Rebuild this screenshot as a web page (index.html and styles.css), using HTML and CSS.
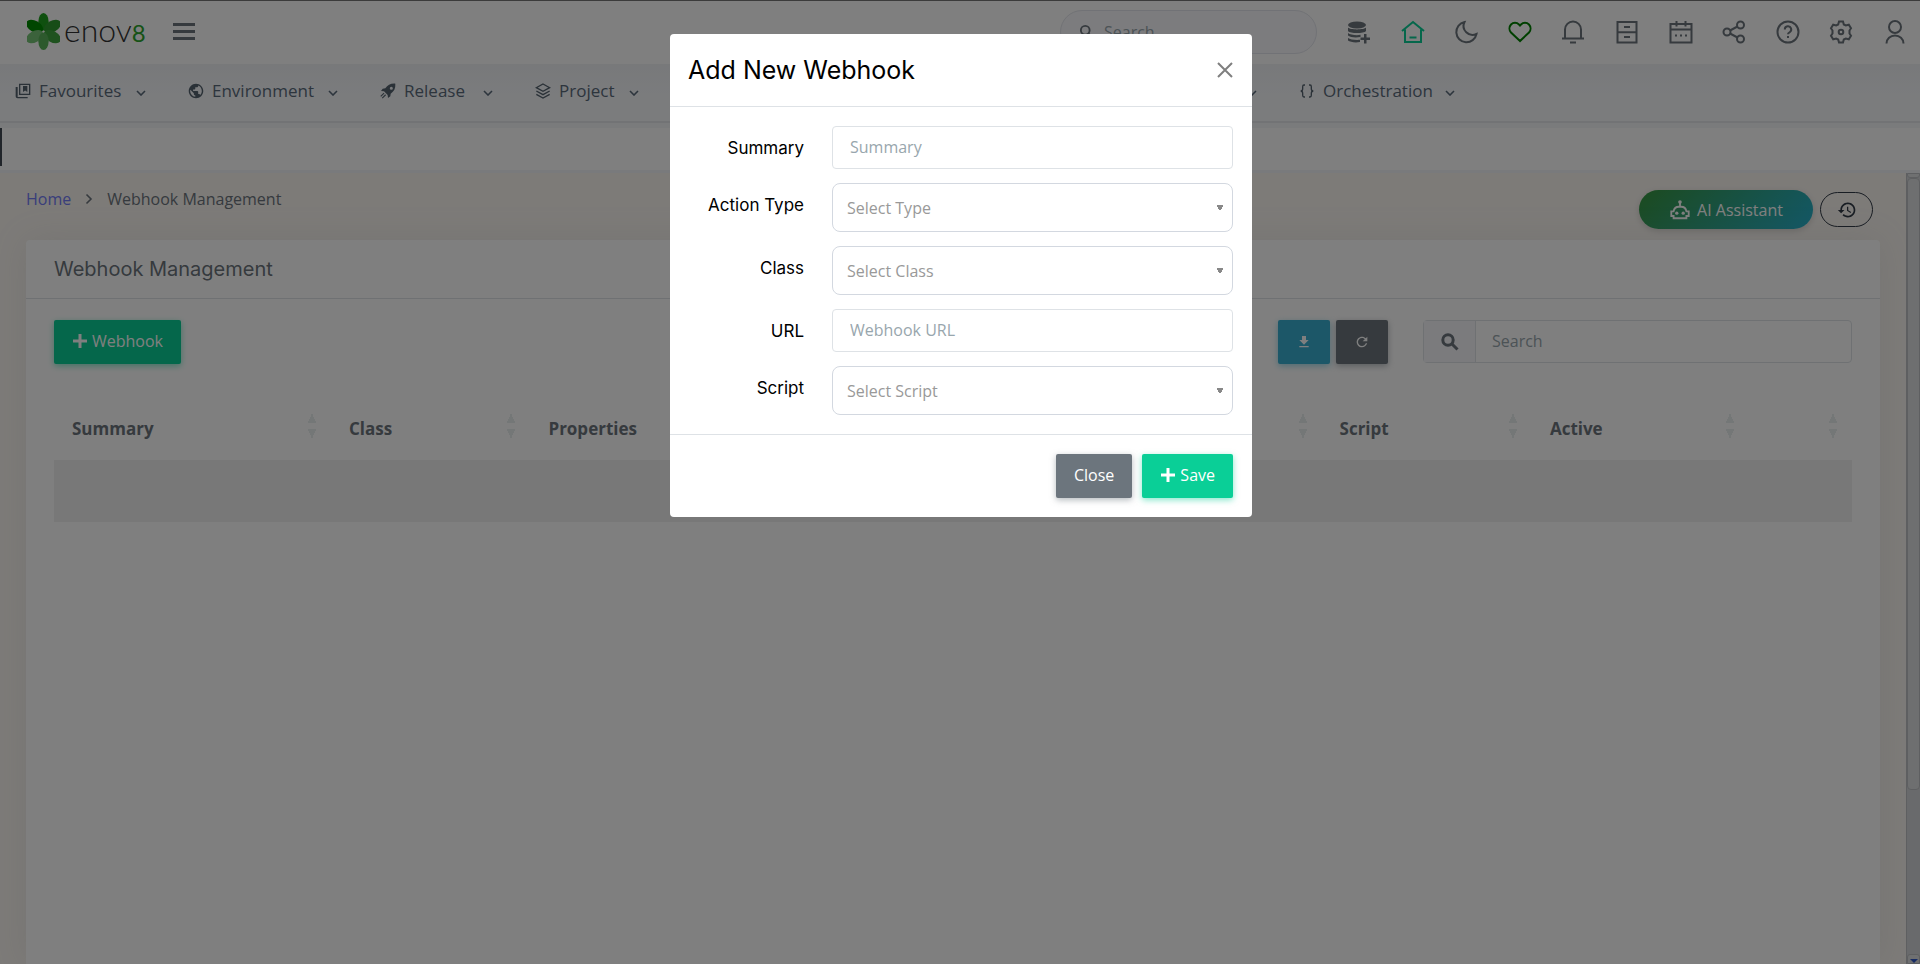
FILE: index.html
```html
<!DOCTYPE html>
<html lang="en">
    <head>
        <meta charset="utf-8">
        <title>Webhook Management</title>
        <link rel="stylesheet" href="styles.css">
    </head>

    <body>

        <header class="topbar">
            <a href="#" class="logo" aria-label="enov8">
                <svg class="logo_flower" viewBox="0 0 32 36">
                    <ellipse cx="16" cy="8.500" rx="5" ry="8.500" fill="#1fa01f"/>
                    <ellipse cx="16" cy="8" rx="5.500" ry="9" fill="#008c00" transform="rotate(-60 16 18)"/>
                    <ellipse cx="16" cy="8" rx="5.500" ry="9" fill="#2f9b2f" transform="rotate(60 16 18)"/>
                    <ellipse cx="16" cy="8" rx="5.500" ry="9" fill="#77c477" transform="rotate(-120 16 18)"/>
                    <ellipse cx="16" cy="8" rx="5.500" ry="9" fill="#3fa53f" transform="rotate(120 16 18)"/>
                    <ellipse cx="16" cy="8.500" rx="5" ry="8.500" fill="#5ab35a" transform="rotate(180 16 18)"/>
                </svg>
                <span class="logo_text">enov<span class="logo_eight">8</span></span>
            </a>
            <button type="button" class="menu_toggle" aria-label="Menu"><i></i><i></i><i></i></button>

            <div class="top_search">
                <svg class="line_icon small" viewBox="0 0 24 24"><circle cx="10" cy="10" r="7"/><path d="M15 15l6 6"/></svg>
                <input type="text" placeholder="Search" aria-label="Search">
            </div>

            <div class="top_icons">
                <button type="button" aria-label="Data">
                    <svg class="fill_icon" viewBox="0 0 24 24"><ellipse cx="10" cy="5" rx="9" ry="3.500"/><path d="M1 7.500c2 2.500 16 2.500 18 0v3.500c-2 2.800-16 2.800-18 0zM1 13c2 2 9 2.600 12.500 1.800V17C9 18 3 17.500 1 15.500zM1 18c2 1.500 7 2.200 12 1.800V22C8 23 3 22 1 20.500zM17 14h2.500v3.500H23V20h-3.500v3.500H17V20h-3.500v-2.500H17z"/></svg>
                </button>
                <button type="button" aria-label="Home">
                    <svg class="line_icon home" viewBox="0 0 24 24"><path d="M1 11L12 2l11 9M4 9.500V22h16V9.500M8.500 17.500h7"/></svg>
                </button>
                <button type="button" aria-label="Dark mode">
                    <svg class="line_icon" viewBox="0 0 24 24"><path d="M10.500 2A10.200 10.200 0 1 0 22.500 14 9 9 0 0 1 10.500 2z"/></svg>
                </button>
                <button type="button" aria-label="Health">
                    <svg class="line_icon heart" viewBox="0 0 24 24"><path d="M12 21L3 12.500a6 6 0 0 1 0-8 5.700 5.700 0 0 1 8 0l1 1 1-1a5.700 5.700 0 0 1 8 0 6 6 0 0 1 0 8z"/></svg>
                </button>
                <button type="button" aria-label="Notifications">
                    <svg class="line_icon" viewBox="0 0 24 24"><path d="M1 18.500h22M4 18V9.500a8 8 0 0 1 16 0V18M9 22.500h6"/></svg>
                </button>
                <button type="button" aria-label="Library">
                    <svg class="line_icon" viewBox="0 0 24 24"><path d="M2.500 2h19v20.500h-19zM2.500 12.300h19M9 7h6M9 17h6"/></svg>
                </button>
                <button type="button" aria-label="Calendar">
                    <svg class="line_icon" viewBox="0 0 24 24"><path d="M1.500 4h21v18.500h-21zM1.500 9.500h21M7.500 1v5.500M16.500 1v5.500M6 15.500h2M11 15.500h2M16 15.500h2"/></svg>
                </button>
                <button type="button" aria-label="Share">
                    <svg class="line_icon" viewBox="0 0 24 24"><circle cx="5" cy="12" r="3.500"/><circle cx="18.500" cy="5" r="3.500"/><circle cx="18.500" cy="19" r="3.500"/><path d="M8 10.500l7.500-4M8 13.500l7.500 4"/></svg>
                </button>
                <button type="button" aria-label="Help">
                    <svg class="line_icon" viewBox="0 0 24 24"><circle cx="12" cy="12" r="10.500"/><path d="M8.800 9.500a3.200 3.200 0 1 1 4.700 2.800c-1 .5-1.500 1-1.500 2M12 16v2"/></svg>
                </button>
                <button type="button" aria-label="Settings">
                    <svg class="line_icon" viewBox="0 0 24 24"><path d="M10 1.500h4l.8 3 2 1 3-.8 2.200 3.600-1.500 2.200v3l1.500 2.200-2.200 3.600-3-.8-2 1-.8 3h-4l-.8-3-2-1-3 .8L2 15.700l1.500-2.200v-3L2 8.300l2.200-3.600 3 .8 2-1z"/><circle cx="12" cy="12" r="2.300"/></svg>
                </button>
                <button type="button" aria-label="Account">
                    <svg class="line_icon" viewBox="0 0 24 24"><circle cx="12" cy="7" r="6"/><path d="M3.500 23.500a8.500 8 0 0 1 17 0"/></svg>
                </button>
            </div>
        </header>

        <nav class="main_nav">
            <a href="#">
                <svg class="nav_icon" viewBox="0 0 24 24"><path d="M4 6H1v14c0 1.700 1.300 3 3 3h15v-2H4zM6 1v17h17V1zm15 15H8V3h13zM12 4.500v9l3.200-2.300 3.300 2.300v-9z"/></svg>
                Favourites
                <svg class="caret" viewBox="0 0 10 6"><path d="M1 1l4 4 4-4"/></svg>
            </a>
            <a href="#">
                <svg class="nav_icon" viewBox="1 1 22 22"><path d="M12 2C6.480 2 2 6.480 2 12s4.480 10 10 10 10-4.480 10-10S17.520 2 12 2zm-1 17.930c-3.950-.49-7-3.850-7-7.930 0-.62.08-1.210.21-1.790L9 15v1c0 1.100.9 2 2 2v1.930zm6.900-2.540c-.26-.81-1-1.390-1.900-1.390h-1v-3c0-.55-.45-1-1-1H8v-2h2c.55 0 1-.45 1-1V7h2c1.100 0 2-.9 2-2v-.41c2.930 1.190 5 4.060 5 7.410 0 2.080-.8 3.970-2.100 5.390z"/></svg>
                Environment
                <svg class="caret" viewBox="0 0 10 6"><path d="M1 1l4 4 4-4"/></svg>
            </a>
            <a href="#">
                <svg class="nav_icon" viewBox="0 0 24 24"><path fill-rule="evenodd" d="M23 1c-7-.5-11.500 2-15 7L4 8.500 1.500 12l4.500.5 5.500 5.500.5 4.500 3.500-2.500.5-4c5-3.500 7.500-8 7-15zm-6 4.500a2.300 2.300 0 1 1 0 4.600 2.300 2.300 0 0 1 0-4.600z"/><path d="M5.500 14.500l1.200 1.200-5 5-1.200-1.200zM7.800 17l1.200 1.200-5 5L2.800 22z"/></svg>
                Release
                <svg class="caret" viewBox="0 0 10 6"><path d="M1 1l4 4 4-4"/></svg>
            </a>
            <a href="#">
                <svg class="nav_icon nav_line" viewBox="0 0 24 24"><path d="M12 1.500l10 5.500-10 5.500L2 7zM2 12l10 5.500L22 12M2 17l10 5.500L22 17"/></svg>
                Project
                <svg class="caret" viewBox="0 0 10 6"><path d="M1 1l4 4 4-4"/></svg>
            </a>
            <a href="#">
                <svg class="nav_icon nav_line" viewBox="0 0 24 24"><path d="M3 3h18v18H3zM3 12h18"/></svg>
                Data
                <svg class="caret" viewBox="0 0 10 6"><path d="M1 1l4 4 4-4"/></svg>
            </a>
            <a href="#">
                <svg class="nav_icon nav_line" viewBox="0 0 24 24"><path d="M3 21V9M12 21V3M21 21v-8"/></svg>
                Reports
                <svg class="caret" viewBox="0 0 10 6"><path d="M1 1l4 4 4-4"/></svg>
            </a>
            <a href="#">
                <svg class="nav_icon nav_line" viewBox="0 0 24 24"><circle cx="12" cy="12" r="9"/></svg>
                Service
                <svg class="caret" viewBox="0 0 10 6"><path d="M1 1l4 4 4-4"/></svg>
            </a>
            <a href="#">
                <svg class="nav_icon nav_line" viewBox="0 0 24 24"><path d="M9 3H7.500C6 3 5.500 4 5.500 5.500v3c0 2-1 3.500-3 3.500 2 0 3 1.500 3 3.500v3c0 1.500.5 2.500 2 2.500H9M15 3h1.500c1.500 0 2 1 2 2.500v3c0 2 1 3.500 3 3.500-2 0-3 1.500-3 3.500v3c0 1.500-.5 2.500-2 2.500H15"/></svg>
                Orchestration
                <svg class="caret" viewBox="0 0 10 6"><path d="M1 1l4 4 4-4"/></svg>
            </a>
        </nav>

        <div class="tab_strip"></div>

        <div class="page">
            <main class="content">

                <div class="page_head">
                    <div class="breadcrumb">
                        <a href="#">Home</a>
                        <svg viewBox="0 0 8 12"><path d="M1.500 1.500L6 6l-4.500 4.500"/></svg>
                        <span>Webhook Management</span>
                    </div>
                    <div class="head_actions">
                        <button type="button" class="ai_button">
                            <svg viewBox="0 0 24 24"><path d="M12 3v5M5 13.500a6 6 0 0 1 6-5h2a6 6 0 0 1 6 5h2.500v5H19V21H5v-2.500H2.500v-5z"/><circle class="dot" cx="12" cy="3.300" r="2"/><circle class="dot" cx="8.500" cy="15.500" r="1.800"/><circle class="dot" cx="15.500" cy="15.500" r="1.800"/></svg>
                            AI Assistant
                        </button>
                        <button type="button" class="history_button" aria-label="History">
                            <svg viewBox="0 0 24 24"><path d="M13 3c-4.970 0-9 4.030-9 9H1l3.890 3.890.07.14L9 12H6c0-3.870 3.130-7 7-7s7 3.130 7 7-3.130 7-7 7c-1.930 0-3.680-.79-4.940-2.060l-1.420 1.420C8.270 19.990 10.510 21 13 21c4.970 0 9-4.030 9-9s-4.030-9-9-9zm-1 5v5l4.280 2.540.72-1.210-3.500-2.080V8H12z"/></svg>
                        </button>
                    </div>
                </div>

                <section class="card">
                    <h4 class="card_title">Webhook Management</h4>
                    <div class="card_body">

                        <div class="toolbar">
                            <button type="button" class="btn green"><svg viewBox="0 0 16 16"><path d="M6.500 1h3v5.500H15v3H9.500V15h-3V9.500H1v-3h5.500z"/></svg>Webhook</button>
                            <div class="toolbar_right">
                                <button type="button" class="btn blue icon_only" aria-label="Download"><svg viewBox="0 0 24 24"><path d="M19 9h-4V3H9v6H5l7 7 7-7zM5 18v2h14v-2H5z"/></svg></button>
                                <button type="button" class="btn gray icon_only" aria-label="Refresh"><svg viewBox="0 0 24 24"><path d="M17.650 6.350C16.200 4.900 14.210 4 12 4c-4.420 0-7.990 3.580-7.990 8s3.570 8 7.990 8c3.730 0 6.840-2.550 7.730-6h-2.080c-.82 2.330-3.040 4-5.650 4-3.310 0-6-2.690-6-6s2.690-6 6-6c1.660 0 3.140.69 4.220 1.780L13 11h7V4l-2.350 2.350z"/></svg></button>
                                <div class="table_search">
                                    <span><svg viewBox="0 0 18 18"><circle cx="7" cy="7" r="5.200"/><path d="M11 11l5.500 5.500"/></svg></span>
                                    <input type="text" placeholder="Search" aria-label="Search webhooks">
                                </div>
                            </div>
                        </div>

                        <table class="webhooks">
                            <thead>
                                <tr>
                                    <th class="w_summary">Summary</th>
                                    <th class="w_class">Class</th>
                                    <th class="w_properties">Properties</th>
                                    <th class="w_type">Action Type</th>
                                    <th class="w_url">URL</th>
                                    <th class="w_script">Script</th>
                                    <th class="w_active">Active</th>
                                    <th class="w_last"></th>
                                </tr>
                            </thead>
                            <tbody>
                                <tr><td colspan="8"></td></tr>
                            </tbody>
                        </table>

                    </div>
                </section>

            </main>

            <div class="scrollbar">
                <div class="scroll_up"></div>
                <div class="scroll_thumb"></div>
                <div class="scroll_down"></div>
            </div>
        </div>

        <div class="backdrop">
            <form class="modal" role="dialog" aria-labelledby="modal_title">

                <div class="modal_header">
                    <h4 id="modal_title">Add New Webhook</h4>
                    <button type="button" class="modal_close" aria-label="Close dialog"><svg viewBox="0 0 18 18"><path d="M2 2l14 14M16 2L2 16"/></svg></button>
                </div>

                <div class="modal_body">
                    <label for="summary">Summary</label>
                    <input type="text" id="summary" name="summary" placeholder="Summary">

                    <label for="action_type">Action Type</label>
                    <select id="action_type" name="action_type"><option value="">Select Type</option></select>

                    <label for="class">Class</label>
                    <select id="class" name="class"><option value="">Select Class</option></select>

                    <label for="url">URL</label>
                    <input type="text" id="url" name="url" placeholder="Webhook URL">

                    <label for="script">Script</label>
                    <select id="script" name="script"><option value="">Select Script</option></select>
                </div>

                <div class="modal_footer">
                    <button type="button" class="btn gray">Close</button>
                    <button type="button" class="btn green"><svg viewBox="0 0 16 16"><path d="M6.500 1h3v5.500H15v3H9.500V15h-3V9.500H1v-3h5.500z"/></svg>Save</button>
                </div>

            </form>
        </div>

    </body>
</html>
```
FILE: styles.css
```css
* {
    box-sizing: border-box;
}

body {
    margin: 0;
    height: 100vh;
    display: flex;
    flex-direction: column;
    overflow: hidden;
    background-color: #faf6f1;
    font-family: "Open Sans", sans-serif;
    font-size: 16px;
    line-height: 24px;
    color: #6c757d;
}

button, input, select {
    font-family: inherit;
    font-size: 16px;
}

button {
    border: none;
    background: none;
    padding: 0;
    cursor: pointer;
}

a {
    text-decoration: none;
}

h4 {
    margin: 0;
    font-family: Inter, sans-serif;
    font-weight: 400;
}

/* top bar */

.topbar {
    display: flex;
    align-items: center;
    height: 64px;
    flex-shrink: 0;
    padding: 0 13px 2px 27px;
    border-top: 1px solid #777;
    background-color: white;
}

.logo {
    display: flex;
    align-items: center;
    gap: 4px;
    color: #333;
}

.logo_flower {
    width: 33px;
    height: 37px;
}

.logo_text {
    width: 82px;
    font-family: Lato, sans-serif;
    font-weight: 300;
    font-size: 32px;
    line-height: 40px;
}

.logo_eight {
    font-size: 24px;
    font-weight: 400;
    color: #2ca52c;
}

.menu_toggle {
    display: flex;
    flex-direction: column;
    gap: 4px;
    width: 22px;
    margin-left: 27px;
}

.menu_toggle i {
    height: 3px;
    width: 100%;
    background-color: #6c757d;
}

.top_search {
    display: flex;
    align-items: center;
    gap: 10px;
    width: 257px;
    height: 44px;
    margin-left: auto;
    margin-right: 30px;
    padding: 0 18px;
    border: 1px solid #e3e5ec;
    border-radius: 22px;
    background-color: #f8f8fc;
}

.top_search input {
    width: 100%;
    border: none;
    background: none;
    padding: 0;
}

input::placeholder {
    color: #98a6ad;
    opacity: 1;
}

.top_icons {
    display: flex;
    justify-content: space-between;
    width: 560px;
}

.top_icons button {
    height: 24px;
}

.line_icon, .fill_icon {
    display: block;
    width: 24px;
    height: 24px;
}

.line_icon {
    fill: none;
    stroke: #6c757d;
    stroke-width: 2;
}

.fill_icon {
    fill: #6c757d;
}

.line_icon.small {
    width: 15px;
    height: 15px;
    flex-shrink: 0;
    stroke-width: 3;
}

.line_icon.home {
    stroke: #0acf97;
}

.line_icon.heart {
    stroke: green;
}

/* navigation */

.main_nav {
    display: grid;
    grid-template-columns: 173px 192px 155px 146px 206px 206px 206px 198px;
    align-items: center;
    height: 64px;
    flex-shrink: 0;
    padding: 0 15px 10px;
    background: linear-gradient(#f0f2f5, #f6f8fb 30px, #f6f8fb 57px, #e4e6ea 57px, #e4e6ea 59px, #f4f6f9 59px);
}

.main_nav a {
    display: flex;
    align-items: center;
    gap: 8px;
    padding-right: 42px;
    font-size: 17px;
    color: #5b6b7b;
}

.nav_icon {
    width: 16px;
    height: 16px;
    flex-shrink: 0;
    fill: #55636f;
}

.nav_line {
    fill: none;
    stroke: #55636f;
    stroke-width: 2;
}

.caret {
    width: 10px;
    height: 6px;
    margin-left: auto;
    margin-top: 4px;
    fill: none;
    stroke: #5b6b7b;
    stroke-width: 1.6;
}

.tab_strip {
    height: 45px;
    flex-shrink: 0;
    background: linear-gradient(#434b55, #434b55) 0 0 / 2px 38px no-repeat;
    background-color: white;
    border-bottom: 3px solid #f2f4f9;
}

/* page */

.page {
    display: flex;
    flex: 1;
    min-height: 0;
}

.content {
    display: flex;
    flex-direction: column;
    flex: 1;
    padding: 0 26px;
}

.page_head {
    display: flex;
    justify-content: space-between;
    padding: 14px 7px 11px 0;
}

.breadcrumb {
    display: flex;
    align-items: center;
    gap: 14px;
    height: 24px;
}

.breadcrumb a {
    color: #727cf5;
}

.breadcrumb svg {
    width: 8px;
    height: 12px;
    fill: none;
    stroke: #6c757d;
    stroke-width: 1.6;
}

.head_actions {
    display: flex;
    align-items: center;
    gap: 7px;
    padding-top: 3px;
}

.ai_button {
    display: flex;
    align-items: center;
    justify-content: center;
    gap: 6px;
    width: 174px;
    height: 39px;
    border-radius: 20px;
    background: linear-gradient(135deg, #38963f, #26b0cd);
    box-shadow: 0 2px 6px rgba(0, 0, 0, 0.15);
    font-weight: 500;
    color: white;
}

.ai_button svg {
    width: 22px;
    height: 22px;
    fill: none;
    stroke: white;
    stroke-width: 2;
}

.ai_button .dot {
    fill: white;
    stroke: none;
}

.history_button {
    width: 53px;
    height: 35px;
    border: 1px solid #313a46;
    border-radius: 18px;
}

.history_button svg {
    width: 20px;
    height: 20px;
    display: block;
    margin: auto;
    fill: #313a46;
}

.card {
    flex: 1;
    border-radius: 4px 4px 0 0;
    background-color: white;
    box-shadow: 0 0 35px rgba(154, 161, 171, 0.15);
}

.card_title {
    padding: 16px 28px 15px;
    border-bottom: 1px solid #dee2e6;
    font-size: 20px;
    line-height: 27px;
}

.card_body {
    padding: 21px 28px;
}

.toolbar, .toolbar_right {
    display: flex;
    align-items: flex-start;
}

.toolbar {
    justify-content: space-between;
}

.toolbar_right {
    gap: 6px;
}

.btn {
    display: flex;
    align-items: center;
    justify-content: center;
    gap: 4px;
    height: 44px;
    padding: 0 18px 2px;
    border-radius: 2px;
    color: white;
}

.btn svg {
    width: 16px;
    height: 16px;
    fill: white;
}

.btn.green {
    background-color: #0acf97;
    box-shadow: 0 2px 6px rgba(10, 207, 151, 0.5);
}

.btn.blue {
    background-color: #39afd1;
    box-shadow: 0 2px 6px rgba(57, 175, 209, 0.5);
}

.btn.gray {
    background-color: #6c757d;
    box-shadow: 0 2px 6px rgba(108, 117, 125, 0.5);
}

.btn.icon_only {
    width: 52px;
    padding: 0;
}

.table_search {
    display: flex;
    width: 429px;
    height: 43px;
    margin-left: 29px;
    border: 1px solid #dee2e6;
    border-radius: 4px;
}

.table_search span {
    display: flex;
    align-items: center;
    justify-content: center;
    width: 52px;
    border-right: 1px solid #dee2e6;
    background-color: #f6f6fb;
}

.table_search svg {
    width: 18px;
    height: 18px;
    fill: none;
    stroke: #6c757d;
    stroke-width: 3;
}

.table_search input {
    flex: 1;
    border: none;
    background: none;
    padding: 0 16px 2px;
}

.webhooks {
    width: 100%;
    margin-top: 34px;
    table-layout: fixed;
    border-collapse: collapse;
}

.webhooks th {
    height: 62px;
    padding: 0 18px;
    text-align: left;
    font-size: 17px;
    font-weight: 700;
    background-image:
        conic-gradient(from 157deg at 50% 0, #e9efee 46deg, transparent 0),
        conic-gradient(from -23deg at 50% 100%, #e9efee 46deg, transparent 0);
    background-size: 10px 10px;
    background-position: right 14px top 15px, right 14px top 31px;
    background-repeat: no-repeat;
}

.w_summary { width: 15.4%; }
.w_class { width: 11.1%; }
.w_properties { width: 13.5%; }
.w_type { width: 14.5%; }
.w_url { width: 16%; }
.w_script { width: 11.7%; }
.w_active { width: 12.1%; }
.w_last { width: 5.7%; }

.webhooks td {
    height: 62px;
    background-color: #f1f1f1;
}

.scrollbar {
    display: flex;
    flex-direction: column;
    width: 14px;
    border-left: 1px solid #bcbfc3;
    background-color: #d3d5d8;
}

.scroll_up, .scroll_down {
    height: 5px;
    border: 1px solid #bcbfc3;
    border-radius: 0 0 3px 3px;
    background-color: #dfe0e2;
}

.scroll_thumb {
    height: 612px;
    border: 1px solid #bcbfc3;
    border-radius: 4px;
    background-color: #dcdee0;
}

.scroll_down {
    display: flex;
    justify-content: center;
    align-items: flex-end;
    height: 10px;
    margin-top: auto;
    border-radius: 3px 3px 0 0;
}

.scroll_down::after {
    content: "";
    border: 4px solid transparent;
    border-top-color: #3058c8;
    border-bottom: 0;
}

/* add webhook dialog */

.backdrop {
    position: fixed;
    top: 0;
    left: 0;
    right: 0;
    bottom: 0;
    padding-top: 34px;
    padding-left: 2px;
    background-color: rgba(0, 0, 0, 0.5);
}

.modal {
    width: 582px;
    margin: 0 auto;
    border-radius: 4px;
    background-color: white;
    color: black;
}

.modal_header {
    display: flex;
    align-items: center;
    justify-content: space-between;
    height: 73px;
    padding: 0 18px;
    border-bottom: 1px solid #dee2e6;
}

.modal_header h4 {
    font-size: 25px;
    line-height: 36px;
}

.modal_close svg {
    display: block;
    width: 18px;
    height: 18px;
    fill: none;
    stroke: #7f7f7f;
    stroke-width: 2;
}

.modal_body {
    display: grid;
    grid-template-columns: 116px 1fr;
    gap: 14px 28px;
    padding: 19px 19px 19px 18px;
}

.modal_body label {
    padding-top: 10px;
    text-align: right;
    font-family: Inter, sans-serif;
    font-size: 17px;
}

.modal_body input {
    height: 43px;
    padding: 0 17px 2px;
    border: 1px solid #dee2e6;
    border-radius: 4px;
}

.modal_body select {
    height: 49px;
    padding: 0 14px;
    border: 1px solid #d3d8e0;
    border-radius: 8px;
    appearance: none;
    background:
        conic-gradient(from -32deg at 50% 100%, #888 64deg, transparent 0) right 8px center / 8px 6px no-repeat;
    color: #999;
}

.modal_footer {
    display: flex;
    justify-content: flex-end;
    gap: 10px;
    padding: 19px 19px 19px 18px;
    border-top: 1px solid #dee2e6;
}
```
